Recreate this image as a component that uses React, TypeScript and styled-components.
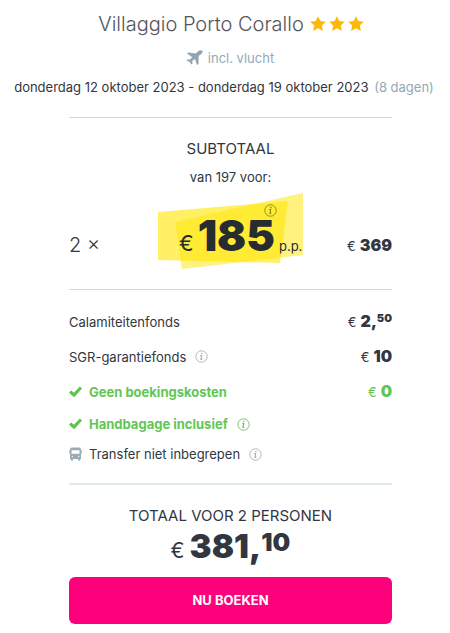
import React from "react";
import styled, { createGlobalStyle } from "styled-components";

const GlobalStyle = createGlobalStyle`
  *, *::before, *::after { box-sizing: border-box; }
  body {
    margin: 0;
    background: #fff;
    color: #32363f;
    font-family: Inter, "Liberation Sans", sans-serif;
    font-size: 13px;
    line-height: 20px;
  }
`;

const Page = styled.main`
  padding-bottom: 8px;
`;

const Header = styled.header`
  display: flex;
  flex-direction: column;
  padding: 10px 0 20px;
`;

const TitleRow = styled.div`
  display: flex;
  align-items: center;
  justify-content: center;
  gap: 6px;
  padding-left: 12px;
`;

const Title = styled.h1`
  margin: 0;
  font-size: 20px;
  line-height: 28px;
  font-weight: 300;
  color: #54565a;
`;

const Stars = styled.div`
  display: flex;
  gap: 3px;
`;

const Included = styled.div`
  display: flex;
  align-items: center;
  justify-content: center;
  gap: 5px;
  margin-top: 10px;
  padding-left: 10px;
  color: #93a9b6;
`;

const Dates = styled.p`
  margin: 9px 0 0;
  padding-right: 2px;
  text-align: center;
  white-space: nowrap;
`;

const Days = styled.span`
  margin-left: 2px;
  color: #93a9b6;
`;

const Panel = styled.div`
  padding: 0 58px 0 69px;
`;

const Section = styled.section<{ $top: number; $bottom: number; $strong?: boolean }>`
  padding: ${(p) => p.$top}px 0 ${(p) => p.$bottom}px;
  border-top: ${(p) => (p.$strong ? "2px solid #dfeaf0" : "1px solid #cbdae3")};
`;

const Heading = styled.h2`
  margin: 0;
  font-size: 15px;
  line-height: 20px;
  font-weight: 400;
  text-align: center;
`;

const Note = styled.p`
  margin: 8px 0 0;
  text-align: center;
`;

const PersonRow = styled.div`
  display: grid;
  grid-template-columns: 1fr auto 1fr;
  align-items: end;
  margin-top: 6px;
`;

const Count = styled.span`
  font-size: 20px;
  line-height: 24px;
  font-weight: 300;
  padding-bottom: 13px;
`;

const RowTotal = styled.div`
  justify-self: end;
  padding-bottom: 14px;
`;

const Highlight = styled.div`
  position: relative;
  display: flex;
  align-items: baseline;
  gap: 4px;
  width: 145px;
  height: 77px;
  padding: 18px 0 0 21px;
  color: #272c30;
`;

const Marker = styled.svg`
  position: absolute;
  inset: 0;
`;

const HighlightInfo = styled.div`
  position: absolute;
  top: 11px;
  left: 106px;
`;

const HighlightPart = styled.span<{ $size: number; $weight: number }>`
  position: relative;
  font-size: ${(p) => p.$size}px;
  font-weight: ${(p) => p.$weight};
  line-height: 48px;
`;

const List = styled.ul`
  display: flex;
  flex-direction: column;
  margin: 0;
  padding: 0;
  list-style: none;
`;

const Item = styled.li<{ $tone?: "good"; $height: number }>`
  display: flex;
  align-items: center;
  height: ${(p) => p.$height}px;
  gap: 9px;
  color: ${(p) => (p.$tone ? "#62c655" : "inherit")};
  font-weight: ${(p) => (p.$tone ? 700 : 400)};
`;

const Labelled = styled.span`
  display: flex;
  align-items: center;
  gap: 7px;
`;

const PriceText = styled.span`
  display: inline-flex;
  align-items: baseline;
  gap: 4px;
  margin-left: auto;
  font-weight: 400;
`;

const Amount = styled.strong`
  font-size: 16px;
  font-weight: 900;
`;

const Cents = styled.sup`
  font-size: 11px;
  line-height: 0;
  vertical-align: 5px;
`;

const InfoButton = styled.button<{ $tone?: "good" | "marker" }>`
  display: flex;
  margin: 0;
  padding: 0;
  border: 0;
  background: none;
  color: ${(p) => (p.$tone === "good" ? "#62c655" : p.$tone === "marker" ? "#8a8420" : "#a3b2bb")};
  cursor: pointer;
`;

const GrandTotal = styled.p`
  display: flex;
  align-items: baseline;
  justify-content: center;
  gap: 5px;
  margin: 0;
  font-size: 21px;
  line-height: 40px;
`;

const GrandAmount = styled.strong`
  font-size: 33px;
  font-weight: 900;
`;

const GrandCents = styled.sup`
  font-size: 25px;
  line-height: 0;
  vertical-align: 7px;
`;

const BookButton = styled.button`
  display: block;
  width: 100%;
  height: 47px;
  margin-top: 6px;
  padding-bottom: 3px;
  border: 0;
  border-radius: 6px;
  background: #ff007d;
  color: #fff;
  font: inherit;
  font-size: 13px;
  font-weight: 700;
  cursor: pointer;
`;

const Star = () => (
  <svg width="16" height="16" viewBox="0 0 16 16" fill="#fdb90b" aria-hidden="true">
    <path d="M8 .2l2.400 4.900 5.400.7-4 3.700 1.100 5.500L8 12.300 3.100 15l1.100-5.500-4-3.700 5.400-.7z" />
  </svg>
);

const Plane = () => (
  <svg width="17" height="16" viewBox="0 0 17 16" fill="#93a5b0" aria-hidden="true">
    <path d="M16.600 1.100c.4.8-.3 2.100-1.300 2.900l-2.600 2.100-.2 7.900-1.500 1-2.100-6-2.700 2.100.3 2.700-1.100.8-1.600-2.700L.5 10.600l.8-1.100 2.700.1 2.300-2.400L1 3.600l1.400-1.200 7.300 1L12.500 1c1.200-1 3.400-.9 4.100.1z" />
  </svg>
);

const Check = () => (
  <svg width="13" height="12" viewBox="0 0 13 12" fill="#5cc44e" aria-hidden="true">
    <path d="M0 6.700l2.200-2.200 2.700 2.300L10.900.5 13 2.600 5.200 11.300z" />
  </svg>
);

const Bus = () => (
  <svg width="13" height="14" viewBox="0 0 13 14" aria-hidden="true">
    <path
      fill="#9babb5"
      fillRule="evenodd"
      d="M3 .5h7Q12 .5 12 2.500V12h-.8V13.500H9V12H4V13.500H1.800V12H1V2.500Q1 .5 3 .5zM2.500 3.200v3.500h8V3.200zM3.300 8.800a.6.6 0 1 0 .01 0zM9.700 8.800a.6.6 0 1 0 .01 0z"
    />
    <path fill="#9babb5" d="M.3 3.200h.9v3.300H.3zM11.800 3.200h.9v3.300h-.9z" />
  </svg>
);

const Info = ({ label, tone }: { label: string; tone?: "good" | "marker" }) => (
  <InfoButton type="button" aria-label={label} $tone={tone}>
    <svg width="13" height="13" viewBox="0 0 13 13" fill="none" stroke="currentColor" aria-hidden="true">
      <circle cx="6.500" cy="6.500" r="5.700" strokeWidth=".9" />
      <path d="M5.300 5.500h1.300L6 9.400h1.300" strokeWidth="1.200" />
      <circle cx="6.900" cy="3.600" r=".8" fill="currentColor" stroke="none" />
    </svg>
  </InfoButton>
);

const Price = ({ whole, cents }: { whole: string; cents?: string }) => (
  <PriceText>
    <span>€</span>
    <Amount>
      {whole}
      {cents && <>,<Cents>{cents}</Cents></>}
    </Amount>
  </PriceText>
);

export default function App() {
  return (
    <Page>
      <GlobalStyle />
      <Header>
        <TitleRow>
          <Title>Villaggio Porto Corallo</Title>
          <Stars role="img" aria-label="3 sterren">
            <Star />
            <Star />
            <Star />
          </Stars>
        </TitleRow>
        <Included>
          <Plane />
          <span>incl. vlucht</span>
        </Included>
        <Dates>
          donderdag 12 oktober 2023 - donderdag 19 oktober 2023 <Days>(8 dagen)</Days>
        </Dates>
      </Header>
      <Panel>
        <Section $top={21} $bottom={19}>
          <Heading>SUBTOTAAL</Heading>
          <Note>van 197 voor:</Note>
          <PersonRow>
            <Count>2 ×</Count>
            <Highlight>
              <Marker width="145" height="77" viewBox="0 0 145 77" aria-hidden="true">
                <path d="M0 19L130 8l-8 62L0 67z" fill="#ffe600" fillOpacity=".6" />
                <path d="M17 29L145 0v62L24 76z" fill="#ffe600" fillOpacity=".5" />
              </Marker>
              <HighlightPart $size={22} $weight={400}>€</HighlightPart>
              <HighlightPart $size={43} $weight={900}>185</HighlightPart>
              <HighlightPart $size={13} $weight={400}>p.p.</HighlightPart>
              <HighlightInfo>
                <Info label="Informatie over de prijs" tone="marker" />
              </HighlightInfo>
            </Highlight>
            <RowTotal>
              <Price whole="369" />
            </RowTotal>
          </PersonRow>
        </Section>
        <Section $top={14} $bottom={14}>
          <List>
            <Item $height={35}>
              Calamiteitenfonds <Price whole="2" cents="50" />
            </Item>
            <Item $height={35}>
              SGR-garantiefonds <Info label="Informatie over het garantiefonds" />
              <Price whole="10" />
            </Item>
            <Item $height={35} $tone="good">
              <Labelled><Check />Geen boekingskosten</Labelled>
              <Price whole="0" />
            </Item>
            <Item $height={30} $tone="good">
              <Labelled><Check />Handbagage inclusief</Labelled>
              <Info label="Informatie over handbagage" tone="good" />
            </Item>
            <Item $height={30}>
              <Labelled><Bus />Transfer niet inbegrepen</Labelled>
              <Info label="Informatie over transfer" />
            </Item>
          </List>
        </Section>
        <Section $top={21} $bottom={0} $strong>
          <Heading>TOTAAL VOOR 2 PERSONEN</Heading>
          <GrandTotal>
            <span>€</span>
            <GrandAmount>
              381,<GrandCents>10</GrandCents>
            </GrandAmount>
          </GrandTotal>
          <BookButton type="button">NU BOEKEN</BookButton>
        </Section>
      </Panel>
    </Page>
  );
}
